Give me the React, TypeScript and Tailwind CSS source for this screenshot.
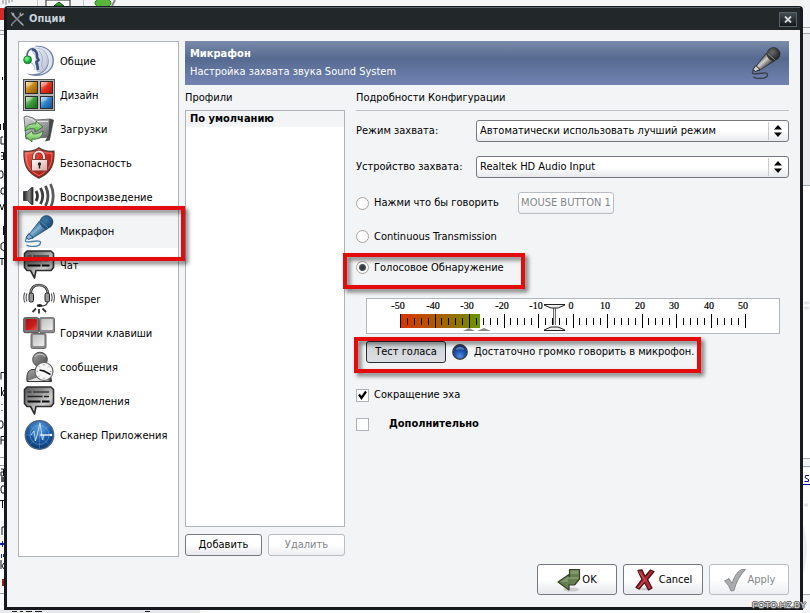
import { useState } from "react";
import type { ReactNode } from "react";
import clsx from "clsx";

const HeadIcon = () => (
  <svg viewBox="0 0 32 32" className="h-8 w-8">
    <defs>
      <linearGradient id="head-shell" x1="0" y1="0" x2="1" y2="1">
        <stop offset="0" stopColor="#eef1f7" />
        <stop offset="1" stopColor="#b9c3d8" />
      </linearGradient>
      <radialGradient id="head-dot" cx=".4" cy=".35" r=".7">
        <stop offset="0" stopColor="#8dff9a" />
        <stop offset=".6" stopColor="#17b53a" />
        <stop offset="1" stopColor="#0a6d20" />
      </radialGradient>
    </defs>
    <path d="M11 1C23-.5 31 6 31 15.500S23 31 13 31c-4 0-7-1-9-2.500 6 1.500 14 .5 18-4.500 4.500-6 4-15-2-19.500C17.500 2 14 1.500 11 1z" fill="#7484a8" />
    <path d="M15 1.800C24 2 29.500 8 29.500 15.500 29.500 23 24 28.500 16 29.500c6-2.500 10-7 9.500-14C25 9 21 4 15 1.800z" fill="#dfe4ee" />
    <path d="M8 3.500c9-2.500 17 3 17 12 0 7-5 11.500-10 11.500-1.500-3-1-6-3-8 .5-4 2-6 0-9C10.500 8 9 6 8 3.500z" fill="url(#head-shell)" stroke="#8d9bb9" strokeWidth=".6" />
    <path d="M9 4c3.500 1 5.500 4 5 8l1.500 3-2 2c1 3 1 5 1.500 8" fill="none" stroke="#3d4f7a" strokeWidth="2.600" />
    <path d="M16 6c3 3 4 7 3 11-.6 3 0 5 1 7" fill="none" stroke="#a3b0ca" strokeWidth="1" />
    <path d="M4 11C4 7 6 4.500 9 3.500" fill="none" stroke="#5b6c94" strokeWidth="1.800" />
    <path d="M8 18c3 1 4 3 4 7" fill="none" stroke="#c3cbdb" strokeWidth="1.400" />
    <circle cx="4.600" cy="14.800" r="4" fill="url(#head-dot)" stroke="#0b6122" strokeWidth=".6" />
  </svg>
);

const DesignIcon = () => (
  <svg viewBox="0 0 32 32" className="h-8 w-8">
    <defs>
      <linearGradient id="tile-amber" x1="0" y1="0" x2="1" y2="1">
        <stop offset="0" stopColor="#ffdc8a" /><stop offset=".5" stopColor="#c08212" /><stop offset="1" stopColor="#8a5600" />
      </linearGradient>
      <linearGradient id="tile-red" x1="0" y1="0" x2="1" y2="1">
        <stop offset="0" stopColor="#ffb0a0" /><stop offset=".5" stopColor="#e02c1c" /><stop offset="1" stopColor="#ab1208" />
      </linearGradient>
      <linearGradient id="tile-green" x1="0" y1="0" x2="1" y2="1">
        <stop offset="0" stopColor="#b5e8ac" /><stop offset=".5" stopColor="#3c9a38" /><stop offset="1" stopColor="#14621a" />
      </linearGradient>
      <linearGradient id="tile-blue" x1="0" y1="0" x2="1" y2="1">
        <stop offset="0" stopColor="#b0dcff" /><stop offset=".5" stopColor="#2f7fc8" /><stop offset="1" stopColor="#0f4c8c" />
      </linearGradient>
    </defs>
    <rect x=".5" y=".5" width="31" height="31" fill="#b4b4b4" stroke="#555" />
    <rect x="2.500" y="2.500" width="12" height="12" fill="url(#tile-amber)" stroke="#2c2c2c" />
    <rect x="17.500" y="2.500" width="12" height="12" fill="url(#tile-red)" stroke="#2c2c2c" />
    <rect x="2.500" y="17.500" width="12" height="12" fill="url(#tile-green)" stroke="#2c2c2c" />
    <rect x="17.500" y="17.500" width="12" height="12" fill="url(#tile-blue)" stroke="#2c2c2c" />
    <path d="M3 8c2-1 5 0 7-5H3zM18 8c2-1 5 0 7-5h-7zM3 23c2-1 5 0 7-5H3zM18 23c2-1 5 0 7-5h-7z" fill="#fff" opacity=".3" />
  </svg>
);

const FolderIcon = () => (
  <svg viewBox="0 0 32 32" className="h-8 w-8">
    <defs>
      <linearGradient id="folder-back" x1="0" y1="0" x2="1" y2="1">
        <stop offset="0" stopColor="#d6d6d6" /><stop offset=".6" stopColor="#9a9a9a" /><stop offset="1" stopColor="#5a5a5a" />
      </linearGradient>
      <linearGradient id="folder-arrow" x1="0" y1="0" x2="0" y2="1">
        <stop offset="0" stopColor="#c6efb4" /><stop offset="1" stopColor="#5bb54a" />
      </linearGradient>
    </defs>
    <path d="M1 4l3-1 6 2 3 2 14-1-1 18-23 2z" fill="url(#folder-back)" stroke="#555" strokeWidth=".8" />
    <path d="M27 6l3.500 1-4 20-4 1 3.500-6z" fill="#4a4a4a" stroke="#333" strokeWidth=".6" />
    <path d="M3 4.500l1 0 5 2 3 2h13" fill="none" stroke="#f2f2f2" strokeWidth=".8" />
    <path d="M2 18c0-5 5-8 11-7l0-3 7 6-8 5 0-3c-4-1-7 0-10 2z" fill="url(#folder-arrow)" stroke="#26662a" strokeWidth=".8" />
    <path d="M20 18c0 6-5 9-11 8l0 3-7-6 7-5 1 3c4 0 7-1 10-3z" fill="url(#folder-arrow)" stroke="#26662a" strokeWidth=".8" />
  </svg>
);

const ShieldIcon = () => (
  <svg viewBox="0 0 32 32" className="h-8 w-8">
    <defs>
      <linearGradient id="shield-red" x1="0" y1="0" x2="1" y2="1">
        <stop offset="0" stopColor="#f06a5c" /><stop offset=".5" stopColor="#d32d20" /><stop offset="1" stopColor="#7b0d08" />
      </linearGradient>
      <linearGradient id="lock-body" x1="0" y1="0" x2="1" y2="1">
        <stop offset="0" stopColor="#fff" /><stop offset="1" stopColor="#dfa09a" />
      </linearGradient>
    </defs>
    <path d="M16 .8c4 3 9 4 15 3.400.4 12-2 21-15 27C3 25.200.6 16.200 1 4.200 7 4.800 12 3.800 16 .8z" fill="url(#shield-red)" stroke="#4f3c3a" strokeWidth="1.200" />
    <path d="M16 3c4 2.600 8 3.500 13 3.200 0 10-2 17-13 22.500C5 23 3 16 3 6.200 8 6.500 12 5.600 16 3z" fill="none" stroke="#fb9a90" strokeWidth=".7" />
    <path d="M11 13V9.500a5 5 0 0 1 10 0V13" fill="none" stroke="#7a2a24" strokeWidth="3.600" />
    <path d="M11 13V9.500a5 5 0 0 1 10 0V13" fill="none" stroke="#f6dcd9" strokeWidth="2.200" />
    <rect x="8.500" y="12.500" width="16" height="11.500" rx="1" fill="url(#lock-body)" stroke="#7e3a34" />
    <circle cx="16.500" cy="17" r="1.700" fill="#222" />
    <path d="M15.800 17h1.400v4.500h-1.400z" fill="#222" />
  </svg>
);

const SpeakerIcon = () => (
  <svg viewBox="0 0 32 32" className="h-8 w-8">
    <defs>
      <linearGradient id="spk" x1="0" y1="0" x2="1" y2="0">
        <stop offset="0" stopColor="#222" /><stop offset=".6" stopColor="#8a8a8a" /><stop offset="1" stopColor="#1c1c1c" />
      </linearGradient>
    </defs>
    <path d="M0.500 10.500h4L8.500 6.500h1.500v17H8.500L4.500 19.500h-4z" fill="url(#spk)" stroke="#333" strokeWidth=".8" />
    <path d="M13 10q3 5 0 10" fill="none" stroke="#333" strokeWidth="2.800" />
    <path d="M17.500 7q4.500 8 0 16" fill="none" stroke="#3f3f3f" strokeWidth="2.800" />
    <path d="M22.500 5q5 10 0 20" fill="none" stroke="#4e4e4e" strokeWidth="2.800" />
    <path d="M27.500 3q5.500 12 0 24" fill="none" stroke="#5c5c5c" strokeWidth="2.800" />
  </svg>
);

const MicIcon = ({ tone }: { tone: "blue" | "dark" }) => {
  const c = tone === "blue"
    ? { light: "#7fb4d6", mid: "#3d7ba5", dark: "#17456a", cord: "#4d83a6" }
    : { light: "#d0d0d0", mid: "#6a6a6a", dark: "#1d1d1d", cord: "#3b3f49" };
  return (
    <svg viewBox="0 0 32 32" className="h-8 w-8">
      <defs>
        <linearGradient id={`mic-body-${tone}`} x1="0" y1="0" x2="1" y2="1">
          <stop offset=".2" stopColor={c.dark} />
          <stop offset=".45" stopColor={c.light} />
          <stop offset=".75" stopColor={c.dark} />
        </linearGradient>
        <radialGradient id={`mic-head-${tone}`} cx=".4" cy=".35" r=".7">
          <stop offset="0" stopColor={c.mid} />
          <stop offset="1" stopColor={c.dark} />
        </radialGradient>
      </defs>
      <path d="M3.500 23C1 27 3 27.500 9 26.500s9-.5 8.500 1.500-3 3.500-7 3.500-6-.5-7-1.500" fill="none" stroke={c.cord} strokeWidth="1.300" />
      <path d="M16.500 6l8.500 7.500L9 23.500l-3.500-3.500z" fill={`url(#mic-body-${tone})`} stroke={c.dark} strokeWidth=".7" />
      <path d="M5.800 18.500L3 22.500l2.500 2 4.500-2z" fill={c.light} stroke={c.dark} strokeWidth="1" />
      <circle cx="23.500" cy="7" r="6.500" fill={`url(#mic-head-${tone})`} stroke={c.dark} strokeWidth=".6" />
      <path d="M17.200 6l8 7.200" fill="none" stroke={c.light} strokeWidth=".9" opacity=".6" />
    </svg>
  );
};

const ChatIcon = ({ id }: { id: string }) => (
  <svg viewBox="0 0 32 32" className="h-8 w-8">
    <defs>
      <linearGradient id={id} x1="0" y1="0" x2="1" y2="1">
        <stop offset="0" stopColor="#555" /><stop offset=".35" stopColor="#8c8c8c" /><stop offset=".65" stopColor="#d0d0d0" /><stop offset="1" stopColor="#6a6a6a" />
      </linearGradient>
    </defs>
    <path d="M4 2h24l2.500 2.500v14L28 21.500H13L11.500 29l-4-7.500H4L1.500 18.500v-14z" fill={`url(#${id})`} stroke="#2e2e2e" strokeWidth="1.600" strokeLinejoin="round" />
    <path d="M4.500 7h4M10 7h16" stroke="#3b3b3b" strokeWidth="1.400" />
    <path d="M4.500 11.500h15M21 11.500h5" stroke="#222" strokeWidth="1.600" />
    <path d="M4.500 16.500h13M19 16.500h7.500" stroke="#0c0c0c" strokeWidth="2" />
  </svg>
);

const HeadsetIcon = () => (
  <svg viewBox="0 0 32 32" className="h-8 w-8">
    <path d="M7.500 12C7.500 5 11 2 16 2s9 3 9 10" fill="none" stroke="#333" strokeWidth="2.600" />
    <path d="M7.500 12C7.500 5 11 2 16 2s9 3 9 10" fill="none" stroke="#bbb" strokeWidth=".8" />
    <rect x="6" y="10" width="4.500" height="9" rx="1.800" fill="#999" stroke="#222" />
    <rect x="22" y="10" width="4.500" height="9" rx="1.800" fill="#999" stroke="#222" />
    <path d="M4 10.500q-1.800 4 0 8M1.800 9.500q-2 5 0 10M28.200 10.500q1.800 4 0 8M30.400 9.500q2 5 0 10" fill="none" stroke="#555" strokeWidth="1.100" />
    <path d="M24.500 19c-.5 3-3 4-6 4" fill="none" stroke="#444" strokeWidth="1.400" />
    <ellipse cx="16.500" cy="22.500" rx="2.800" ry="1.500" fill="#222" />
    <path d="M13 25.500l-3.500 3.500M16 26v4.500M19.500 25.500l3.500 3.500" stroke="#333" strokeWidth="1.800" />
  </svg>
);

const KeysIcon = () => (
  <svg viewBox="0 0 32 32" className="h-8 w-8">
    <defs>
      <linearGradient id="key-red" x1="0" y1="0" x2="1" y2="1">
        <stop offset="0" stopColor="#a01414" /><stop offset=".6" stopColor="#cc1c18" /><stop offset="1" stopColor="#ee5448" />
      </linearGradient>
      <linearGradient id="key-grey" x1="0" y1="0" x2="1" y2="1">
        <stop offset="0" stopColor="#bdbdbd" /><stop offset="1" stopColor="#efefef" />
      </linearGradient>
    </defs>
    <rect x=".7" y=".7" width="15" height="15" rx="1.500" fill="#777" stroke="#5c4a4a" />
    <rect x="2.500" y="2" width="11.500" height="11" rx="1" fill="url(#key-red)" />
    <rect x="16.500" y=".7" width="15" height="15" rx="1.500" fill="#8c8c8c" stroke="#6a6a6a" />
    <rect x="18.300" y="2" width="11.500" height="11" rx="1" fill="url(#key-grey)" />
    <rect x="8" y="16.500" width="15" height="15" rx="1.500" fill="#8c8c8c" stroke="#6a6a6a" />
    <rect x="9.800" y="18" width="11.500" height="11" rx="1" fill="url(#key-grey)" />
  </svg>
);

const AwayIcon = () => (
  <svg viewBox="0 0 32 32" className="h-8 w-8">
    <defs>
      <linearGradient id="away" x1="0" y1="0" x2="1" y2="1">
        <stop offset="0" stopColor="#a6a6a6" /><stop offset="1" stopColor="#444" />
      </linearGradient>
    </defs>
    <path d="M4 30.500c-.5-7 .5-11 5-12h10c6 1 9 5 9.500 12z" fill="url(#away)" stroke="#333" />
    <path d="M4.500 30L14 26.500l13 3.500z" fill="#e4e4e4" />
    <circle cx="17" cy="8.500" r="7.300" fill="url(#away)" stroke="#4a4a4a" />
    <path d="M12 5.500c2-3 8-3 10 0" fill="none" stroke="#c7c7c7" strokeWidth="1.200" />
    <circle cx="21" cy="20.500" r="9" fill="#f6f6f6" stroke="#666" strokeWidth="1.200" />
    <path d="M21 13v1.500M21 26.500V28M13.500 20.500H15M27 20.500h1.500M15.800 15.300l1 1M26.200 15.300l-1 1M15.800 25.700l1-1" stroke="#777" strokeWidth=".8" />
    <path d="M20 19.500l7.500 4M20.500 20l-4-1" stroke="#111" strokeWidth="1.500" />
  </svg>
);

const ScannerIcon = () => (
  <svg viewBox="0 0 32 32" className="h-8 w-8">
    <defs>
      <radialGradient id="scan" cx=".5" cy=".25" r=".8">
        <stop offset="0" stopColor="#5f9fdc" /><stop offset=".5" stopColor="#1c5da6" /><stop offset="1" stopColor="#083468" />
      </radialGradient>
    </defs>
    <circle cx="16.500" cy="16" r="14.200" fill="url(#scan)" stroke="#4a6684" strokeWidth="1.400" />
    <path d="M3 16h27M16.500 2.500v27M7 6.500l19 19M26 6.500l-19 19" stroke="#8fbde6" strokeWidth=".6" opacity=".5" />
    <circle cx="16.500" cy="16" r="9.500" fill="none" stroke="#8fbde6" strokeWidth=".7" opacity=".6" />
    <path d="M8 16l3-4 1.500 10L17 4l2.500 17 1.500-5" fill="none" stroke="#c9e2f8" strokeWidth=".9" />
    <path d="M17 16h12" stroke="#fff" strokeWidth="1.200" />
    <circle cx="28" cy="16" r="1.200" fill="#fff" />
  </svg>
);

const NAV: { label: string; icon: ReactNode }[] = [
  { label: "Общие", icon: <HeadIcon /> },
  { label: "Дизайн", icon: <DesignIcon /> },
  { label: "Загрузки", icon: <FolderIcon /> },
  { label: "Безопасность", icon: <ShieldIcon /> },
  { label: "Воспроизведение", icon: <SpeakerIcon /> },
  { label: "Микрафон", icon: <MicIcon tone="blue" /> },
  { label: "Чат", icon: <ChatIcon id="chat-a" /> },
  { label: "Whisper", icon: <HeadsetIcon /> },
  { label: "Горячии клавиши", icon: <KeysIcon /> },
  { label: "сообщения", icon: <AwayIcon /> },
  { label: "Уведомления", icon: <ChatIcon id="chat-b" /> },
  { label: "Сканер Приложения", icon: <ScannerIcon /> },
];

// Red frame that points at a part of the dialog
const Marker = ({ className }: { className: string }) => (
  <div className={clsx("pointer-events-none absolute z-10 border-4 border-[#e30b0b] drop-shadow-[3px_3px_2px_rgba(0,0,0,0.55)]", className)} />
);

const btn = "rounded-[3px] border border-[#75797f] bg-linear-to-b from-white via-white to-[#e6e8eb] text-black disabled:border-[#b9bcc1] disabled:to-[#eceef1] disabled:text-[#83868a]";

const Combo = ({ id, label, value }: { id: string; label: string; value: string }) => (
  <div className="flex h-[22px] items-center">
    <label htmlFor={id} className="w-[120px] shrink-0">{label}</label>
    <div className="relative h-full flex-1">
      <select id={id} className={clsx(btn, "h-full w-full appearance-none pl-[3px] pr-6")}>
        <option>{value}</option>
      </select>
      <svg viewBox="0 0 22 22" className="pointer-events-none absolute right-0 top-0 h-[22px] w-[22px]">
        <path d="M1.500 2v18" stroke="#c9cbcf" />
        <path d="M7 9.500h8L11 5zM7 12.500h8L11 17z" fill="#000" />
      </svg>
    </div>
  </div>
);

const Radio = ({ label, checked, onSelect }: { label: string; checked: boolean; onSelect: () => void }) => (
  <label className="flex h-[17px] items-center gap-[5px]">
    <input
      type="radio"
      name="mode"
      checked={checked}
      onChange={onSelect}
      className="h-[13px] w-[13px] shrink-0 appearance-none rounded-full border border-[#aaa298] bg-white checked:bg-[radial-gradient(circle,#2c2f33_0,#4a4e54_3px,#fff_4px)]"
    />
    {label}
  </label>
);

const Check = ({ label, checked, bold }: { label: string; checked?: boolean; bold?: boolean }) => (
  <label className={clsx("flex h-4 items-center", bold ? "gap-5 font-bold" : "gap-[5px]")}>
    <span className="relative h-[13px] w-[13px] shrink-0">
      <input type="checkbox" defaultChecked={checked} className="peer block h-[13px] w-[13px] appearance-none border border-[#aeb2b8] bg-white" />
      <svg viewBox="0 0 13 13" className="pointer-events-none absolute inset-0 hidden h-[13px] w-[13px] peer-checked:block">
        <path d="M3 5.500l2.500 3.500L10 2.500" fill="none" stroke="#000" strokeWidth="2.200" />
      </svg>
    </span>
    {label}
  </label>
);

const LEVELS = [-50, -40, -30, -20, -10, 0, 10, 20, 30, 40, 50];

const LevelMeter = () => (
  <div className="relative h-9 border border-[#b3b7bd] bg-white">
    <svg viewBox="0 0 412 34" preserveAspectRatio="xMinYMin meet" className="h-[34px] w-full">
      <defs>
        <linearGradient id="level" x1="0" y1="0" x2="1" y2="0">
          <stop offset="0" stopColor="#d83400" /><stop offset=".45" stopColor="#ad5a00" /><stop offset=".85" stopColor="#7d8200" /><stop offset="1" stopColor="#629a00" />
        </linearGradient>
      </defs>
      <rect x="33" y="15" width="80" height="14" fill="url(#level)" />
      {Array.from({ length: 51 }, (_, i) => {
        const x = Math.round(33 + i * 6.9) + 0.5;
        return i % 5 === 0
          ? <path key={i} d={`M${x} 15v14`} stroke="#000" />
          : <path key={i} d={`M${x} 19v7`} stroke="#000" />;
      })}
      {LEVELS.map((v, i) => (
        <text key={v} x={Math.round(31 + i * 34.5)} y="10" textAnchor="middle" fontSize="10" stroke="#000" strokeWidth=".2" fontFamily="'Liberation Serif', serif">{v}</text>
      ))}
      <path d="M96 32l6-3 6 3zM110 32l7-3 7 3z" fill="#8b8b85" />
      <path d="M187.500 8v18" stroke="#6f6f6f" strokeWidth="3" />
      <path d="M187.500 8v18" stroke="#e4e4e4" strokeWidth="1" />
      <path d="M176.500 5.500h21l-7 3.500h-7zM176.500 31.500h21l-7-3.500h-7z" fill="#eee" />
      <path d="M177 5.500h21M177 6l7 3h7l7-3M177 31.500h21M177 31l7-3h7l7 3" fill="none" stroke="#222" />
    </svg>
    <input type="range" min={-50} max={50} defaultValue={-5} aria-label="Голосовое Обнаружение" className="absolute inset-0 h-full w-full opacity-0" />
  </div>
);

// Slices of the client window that stays open behind the dialog
const Backdrop = () => (
  <div aria-hidden="true" className="pointer-events-none absolute inset-0 overflow-hidden bg-white">
    <svg className="absolute left-0 top-0 h-[613px] w-[200px]" viewBox="0 0 200 613">
      <rect width="200" height="34" fill="#f3f4f6" />
      <path d="M0 8h4v12H0z" fill="#cf2b2b" />
      <path d="M0 30.500h4M0 34.500h4M0 457.500h4M0 465.500h4M0 593.500h4" stroke="#9da1a6" />
      <path
        d="M2.500 77v3M.5 124v6M3.500 123v7M3 137H1v7h3M1 152.500h2.500v7H1M1 156h2M0 171h2l1 2v3l-1 2H0M4 188H2l-1 2v3l1 1h2M0 204l2 6 2-6M3.500 226v9M4 242l-3 2v5l3 2M0 258.500h4M2 259v6M4 372.500H1v7M1.500 387v9M4 390l-2 3 2 3M2 404v1M2 410v1M0 421h2l1 2v3l-1 2H0M4 436.500H1v8M1 440h3M1 469h2.500v7H1v-4h2M4 486H2l-1 2v3l1 2h2M0 500.500h4M2.500 501v7M4 527H2v8M1 560v9M4 563l-2 3 2 3"
        fill="none"
        stroke="#111"
      />
      <path d="M1 477h3v5H1z" fill="#555" />
      <path d="M0 543h4v2H0zM2 541h1v6H2zM1 554h1v4H1zM3 554h1v3H3z" fill="#1919c8" />
      <path d="M2 579h2v7H2z" fill="#a81818" />
      <path d="M0 610h200v3H0z" fill="#e7e8ea" />
      <path d="M12 611.500h5M20 611.500h3M26 611.500h6M35 611.500h7M145 611.500h5" stroke="#222" />
      <path d="M3 0v4M6 0v5M9 0v3M12 0v2" stroke="#8a8a8a" />
      <path d="M46 6V0h24v6" fill="#fff" stroke="#222" />
      <path d="M54 6l5-4 5 4z" fill="#3e9a35" stroke="#134d12" />
      <ellipse cx="103" cy="3" rx="8" ry="5" fill="#58b53c" stroke="#2f7a20" />
      <path d="M112 6l3-6" stroke="#888" strokeWidth="2" />
      <path d="M37.500 0v6M83.500 0v6" stroke="#c5c8cc" />
    </svg>
    <div className="absolute left-[200px] right-0 top-0 h-8 bg-[#f3f4f6]" />
    <div className="absolute right-0 top-0 h-full w-[7px] bg-[#f3f4f6]">
      <svg viewBox="0 0 7 613" className="h-[613px] w-[7px]">
        <path d="M0 34h7v151H0z" fill="#e8eaed" />
        <path d="M0 186h7v272H0zM0 468h7v126H0z" fill="#fff" />
        <path d="M0 27.500h7M0 33.500h7M0 185.500h7M0 458.500h7M0 466.500h7M0 594.500h7" stroke="#a5a8ad" />
        <path d="M1 303h5M1 308h5M1 505h4" stroke="#e1e3e6" strokeWidth="3" />
        <path d="M0 525q8 22 0 50z" fill="#ececec" />
        <path d="M6 475.500H2.500l-.5 2 3.500 2v2H1.500M0 484.500h7" fill="none" stroke="#0a0a9a" />
      </svg>
    </div>
  </div>
);

const App = () => {
  const [section, setSection] = useState("Микрафон");
  const [mode, setMode] = useState(2);

  return (
    <div className="relative flex min-h-screen flex-col pb-[3px] pl-1 pr-[7px] pt-1.5 font-['DejaVu_Sans_Condensed','DejaVu_Sans',sans-serif] text-[11px] leading-4 text-black">
      <Backdrop />
      <div role="dialog" aria-labelledby="title" className="relative flex flex-1 flex-col rounded-t-[4px] border-[3px] border-t border-[#16191d] bg-[#f3f4f6]">
        <header className="flex h-[23px] items-center gap-[5px] border-t border-[#5b666b] bg-[#22272a] pl-[3px] pr-[3px]">
          <svg viewBox="0 0 14 14" className="h-[14px] w-[14px]">
            <path d="M2 2l10 10" stroke="#9da3a8" strokeWidth="1.500" />
            <path d="M11.500 2.500L2 12" stroke="#7c8288" strokeWidth="1.500" />
            <path d="M1 .8l2.500 1L4 4M13.500 1.500l-2 2-1.500-.8L10.500.6M1 12.500l1.500 1M11 11l2.500 2.500" stroke="#a8adb2" strokeWidth="1.200" fill="none" />
          </svg>
          <h1 id="title" className="flex-1 font-bold text-[#c9d1dc]">Опции</h1>
          <button type="button" aria-label="Close" className="flex h-[15px] w-[18px] items-center justify-center border border-[#5a6268] bg-linear-to-b from-[#454d53] to-[#15191c]">
            <svg viewBox="0 0 8 7" className="h-[7px] w-2">
              <path d="M1 .5l6 6M7 .5l-6 6" stroke="#d5dae0" strokeWidth="1.800" />
            </svg>
          </button>
        </header>

        <div className="flex flex-1 flex-col px-[11px] pb-3 pt-[11px]">
          <div className="flex flex-1 gap-1.5">
            <nav className="relative w-[161px] shrink-0 border border-[#b0b4b9] bg-white pt-0.5">
              {NAV.map((item) => (
                <button
                  key={item.label}
                  type="button"
                  onClick={() => setSection(item.label)}
                  className={clsx("relative flex h-[34px] w-full items-center gap-[5px] pl-1 text-left", section === item.label && "bg-[#f3f4f6]")}
                >
                  {item.icon}
                  <span className="pt-px">{item.label}</span>
                </button>
              ))}
              <Marker className="-left-1.5 -right-[7px] top-[164px] h-[55px]" />
            </nav>

            <div className="flex flex-1 flex-col">
              <div className="flex h-11 items-center justify-between bg-linear-to-b from-[#7a8aaa] via-[#566a90] via-40% to-[#7283b2] pl-[5px] pr-[7px] text-white">
                <div className="leading-[18px]">
                  <h2 className="font-bold">Микрафон</h2>
                  <p>Настройка захвата звука Sound System</p>
                </div>
                <MicIcon tone="dark" />
              </div>

              <div className="flex flex-1 gap-[11px]">
                <section className="flex w-40 shrink-0 flex-col">
                  <h3 className="h-[25px] pt-[5px]">Профили</h3>
                  <ul className="flex-1 border border-[#b0b4b9] bg-white">
                    <li className="bg-[#f3f4f6] pl-1 font-bold">По умолчанию</li>
                  </ul>
                  <div className="grid grid-cols-2 gap-1.5 pb-px pt-[7px]">
                    <button type="button" className={clsx(btn, "h-[22px]")}>Добавить</button>
                    <button type="button" disabled className={clsx(btn, "h-[22px]")}>Удалить</button>
                  </div>
                </section>

                <section className="flex-1">
                  <h3 className="h-[26px] border-b border-[#bfc3c8] pt-[5px]">Подробности Конфигурации</h3>
                  <div className="flex flex-col gap-[14px] pt-[9px]">
                    <Combo id="capture-mode" label="Режим захвата:" value="Автоматически использовать лучший режим" />
                    <Combo id="capture-device" label="Устройство захвата:" value="Realtek HD Audio Input" />
                    <div className="flex items-center">
                      <div className="w-[162px]">
                        <Radio label="Нажми что бы говорить" checked={mode === 0} onSelect={() => setMode(0)} />
                      </div>
                      <button type="button" disabled className={clsx(btn, "h-[22px] w-24")}>MOUSE BUTTON 1</button>
                    </div>
                    <Radio label="Continuous Transmission" checked={mode === 1} onSelect={() => setMode(1)} />
                    <div className="relative">
                      <Radio label="Голосовое Обнаружение" checked={mode === 2} onSelect={() => setMode(2)} />
                      <Marker className="-left-[13px] -top-1.5 h-9 w-[182px]" />
                    </div>
                  </div>

                  <div className="pl-2.5 pr-[9px] pt-[22px]">
                    <LevelMeter />
                    <div className="relative mt-[7px] flex items-center">
                      <button type="button" className="h-[22px] w-20 rounded-[3px] border border-[#2b2e32] bg-linear-to-b from-[#cdd0d4] to-[#dcdfe3]">Тест голаса</button>
                      <svg viewBox="0 0 16 16" className="ml-1.5 h-4 w-4">
                        <defs>
                          <radialGradient id="lamp" cx=".5" cy=".8" r=".8">
                            <stop offset="0" stopColor="#4f90ea" /><stop offset=".5" stopColor="#1a4fa8" /><stop offset="1" stopColor="#0b2b66" />
                          </radialGradient>
                        </defs>
                        <circle cx="8" cy="8" r="7.200" fill="url(#lamp)" stroke="#3a4048" strokeWidth="1.400" />
                        <path d="M3.500 6a4.700 4.700 0 0 1 9 0q-4.500-1.500-9 0z" fill="#8fb4ea" opacity=".5" />
                      </svg>
                      <span className="ml-1.5">Достаточно громко говорить в микрофон.</span>
                      <Marker className="-left-3 -top-1 h-9 w-[347px]" />
                    </div>
                  </div>

                  <div className="flex flex-col gap-[13px] pt-6">
                    <Check label="Сокращение эха" checked />
                    <Check label="Дополнительно" bold />
                  </div>
                </section>
              </div>
            </div>
          </div>

          <footer className="flex justify-end gap-1.5 pt-[7px]">
            <button type="button" className={clsx(btn, "flex h-[31px] w-20 items-center justify-center gap-px")}>
              <svg viewBox="0 0 24 24" className="h-6 w-6">
                <ellipse cx="14" cy="21.500" rx="8" ry="2" fill="#ccc" />
                <path d="M12.500 1.500h10v9.500L17.500 17H12v5L1 14l11-7.500v3h.5z" fill="#667d50" stroke="#34412a" strokeWidth="1.200" strokeLinejoin="round" />
                <path d="M13.500 2.500h8V6h-8zM11 8.500L3 14h8v-3h10.500v-2h-8z" fill="#93a87c" opacity=".6" />
              </svg>
              OK
            </button>
            <button type="button" className={clsx(btn, "flex h-[31px] w-20 items-center justify-center gap-[3px]")}>
              <svg viewBox="0 0 22 24" className="h-6 w-[22px]">
                <ellipse cx="11" cy="21" rx="7" ry="1.500" fill="#ccc" />
                <path d="M4 2.500l4-.5 3 6.500L16.500 2l3.500 1.500-6.500 8L18 20l-3.500 2-4-7.500-5.500 6.500L2 19.500l6-8z" fill="#b32c37" stroke="#4c1518" strokeWidth="1.300" strokeLinejoin="round" />
                <path d="M5 3.500l6 9L4 20" fill="none" stroke="#d9636c" strokeWidth=".9" />
              </svg>
              Cancel
            </button>
            <button type="button" disabled className={clsx(btn, "flex h-[31px] w-20 items-center justify-center gap-px")}>
              <svg viewBox="0 0 24 24" className="h-6 w-6">
                <path d="M1.500 13l4.500-2.500 3 5C11 9 14 4 18.500 1.500h4C17 7 13 14 11 22.500L8 23c-1.500-4-3.500-7.500-6.500-10z" fill="#a9abad" stroke="#8a8c8f" strokeWidth="1" strokeLinejoin="round" />
              </svg>
              Apply
            </button>
          </footer>
        </div>
      </div>
      <span className="absolute bottom-[3px] right-1 z-10 font-['Liberation_Sans',sans-serif] text-[9px] leading-[10px] text-[#e2e2e2] [text-shadow:1px_0_0_#555,-1px_0_0_#555,0_1px_0_#555,0_-1px_0_#555]">FOTO.HZ.BY</span>
    </div>
  );
};

export default App;
